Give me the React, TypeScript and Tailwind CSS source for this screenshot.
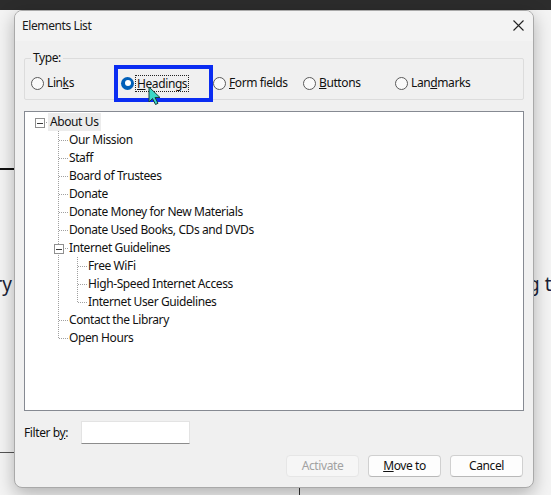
import type { ReactNode } from "react";

type Cell = "none" | "pipe" | "tee" | "ell" | "root";

interface Row {
  label: string;
  cells: Cell[];
  expander?: boolean;
  selected?: boolean;
}

const rows: Row[] = [
  { label: "About Us", cells: ["root"], expander: true, selected: true },
  { label: "Our Mission", cells: ["none", "tee"] },
  { label: "Staff", cells: ["none", "tee"] },
  { label: "Board of Trustees", cells: ["none", "tee"] },
  { label: "Donate", cells: ["none", "tee"] },
  { label: "Donate Money for New Materials", cells: ["none", "tee"] },
  { label: "Donate Used Books, CDs and DVDs", cells: ["none", "tee"] },
  { label: "Internet Guidelines", cells: ["none", "tee"], expander: true },
  { label: "Free WiFi", cells: ["none", "pipe", "tee"] },
  { label: "High-Speed Internet Access", cells: ["none", "pipe", "tee"] },
  { label: "Internet User Guidelines", cells: ["none", "pipe", "ell"] },
  { label: "Contact the Library", cells: ["none", "tee"] },
  { label: "Open Hours", cells: ["none", "ell"] },
];

const font = { fontFamily: '"Noto Sans", "Open Sans", sans-serif' };

function TreeCell({ type, expander }: { type: Cell; expander?: boolean }) {
  const dots = { stroke: "#a0a0a0", strokeWidth: 1, strokeDasharray: "1 1" };
  return (
    <svg width="19" height="18" className="shrink-0" shapeRendering="crispEdges">
      {(type === "pipe" || type === "tee") && <line x1="9.5" y1="0" x2="9.5" y2="18" {...dots} />}
      {type === "ell" && <line x1="9.5" y1="0" x2="9.5" y2="9" {...dots} />}
      {(type === "tee" || type === "ell" || type === "root") && (
        <line x1="10" y1="9.5" x2="19" y2="9.5" {...dots} />
      )}
      {expander && (
        <>
          <rect x="5.5" y="5.5" width="9" height="9" fill="#fff" stroke="#8f8f8f" />
          <line x1="7" y1="10" x2="13" y2="10" stroke="#3a3a3a" />
        </>
      )}
    </svg>
  );
}

function Radio({ label, checked, width }: { label: ReactNode; checked?: boolean; width: string }) {
  return (
    <div className={`flex items-center ${width}`}>
      {checked ? (
        <span className="flex h-[13px] w-[13px] shrink-0 items-center justify-center rounded-full bg-[#005fb8]">
          <span className="h-[6px] w-[6px] rounded-full bg-white" />
        </span>
      ) : (
        <span className="h-[13px] w-[13px] shrink-0 rounded-full border border-[#5a5a5a] bg-[#fafafa]" />
      )}
      <span className={checked ? "ml-[2px] px-[1px] leading-[15px] outline outline-1 outline-dotted outline-[#222]" : "ml-[3px]"}>
        {label}
      </span>
    </div>
  );
}

function Button({ children, disabled }: { children: ReactNode; disabled?: boolean }) {
  return (
    <button
      className={
        disabled
          ? "h-[22px] w-[73px] rounded-[4px] border border-[#e6e6e6] bg-[#f6f6f6] text-[#a2a2a2]"
          : "h-[22px] w-[73px] rounded-[4px] border border-[#d0d0d0] border-b-[#b8b8b8] bg-[#fdfdfd] text-[#111]"
      }
    >
      {children}
    </button>
  );
}

export default function App() {
  return (
    <div
      className="relative h-[495px] w-[551px] overflow-hidden bg-[#f4f4f4] text-[12px] tracking-[-0.4px] text-[#111]"
      style={font}
    >
      {/* page behind the dialog */}
      <div className="h-[10px] w-full bg-[#2c2c2c]" />
      <div className="absolute left-0 top-[168px] h-[2px] w-[200px] bg-[#111]" />
      <div className="absolute left-0 top-[452px] h-[1px] w-[200px] bg-[#555]" />
      <div className="absolute left-[299px] top-[470px] h-[30px] w-[1px] bg-[#333]" />
      <div className="absolute right-[539px] top-[270px] text-[19px] tracking-normal text-[#1a1f36]">Library</div>
      <div className="absolute left-[528px] top-[270px] whitespace-nowrap text-[19px] tracking-normal text-[#1a1f36]">
        g the
      </div>

      {/* dialog window */}
      <div className="absolute left-[14px] top-[10px] flex h-[478px] w-[520px] flex-col overflow-hidden rounded-[8px] border border-[#a9a9a9] bg-[#f0f0f0] shadow-[0_6px_18px_rgba(0,0,0,0.28)]">
        <div className="flex h-[30px] shrink-0 items-start justify-between bg-[#f3f3f3] pl-[7px] pr-[9px] pt-[6px]">
          <span className="text-[#1a1a1a]">Elements List</span>
          <svg width="11" height="11" viewBox="0 0 11 11" className="mt-[3px]">
            <path d="M0.5 0.5 L10.5 10.5 M10.5 0.5 L0.5 10.5" stroke="#222" strokeWidth="1.1" />
          </svg>
        </div>

        <div className="flex flex-1 flex-col px-[9px]">
          <fieldset className="mt-[9px] h-[50px] rounded-[2px] border border-[#dcdcdc] pl-[6px]">
            <legend className="px-[2px] leading-[16px]">Type:</legend>
            <div className="mt-[8px] flex items-center">
              <Radio width="w-[90px]" label={<>Lin<u>k</u>s</>} />
              <Radio width="w-[92px]" checked label={<><u>H</u>eadings</>} />
              <Radio width="w-[90px]" label={<><u>F</u>orm fields</>} />
              <Radio width="w-[92px]" label={<><u>B</u>uttons</>} />
              <Radio width="w-[92px]" label={<>Lan<u>d</u>marks</>} />
            </div>
          </fieldset>

          <div className="mt-[11px] h-[300px] border border-[#868a92] bg-white pl-[5px] pt-[1px]">
            {rows.map((r) => (
              <div key={r.label} className="flex h-[18px] items-center">
                {r.cells.map((c, i) => (
                  <TreeCell key={i} type={c} expander={r.expander && i === r.cells.length - 1} />
                ))}
                <span
                  className={`-ml-[1px] whitespace-nowrap px-[2px] leading-[18px] ${r.selected ? "bg-[#ececec]" : ""}`}
                >
                  {r.label}
                </span>
              </div>
            ))}
          </div>

          <div className="mt-[10px] flex items-center">
            <span className="w-[57px]">
              Filter b<u>y</u>:
            </span>
            <div className="h-[23px] w-[109px] border border-[#e3e3e3] border-b-[#8c8c8c] bg-white" />
          </div>

          <div className="mt-[11px] flex justify-end gap-[9px] pr-[1px]">
            <Button disabled>Activate</Button>
            <Button>
              <u>M</u>ove to
            </Button>
            <Button>Cancel</Button>
          </div>
        </div>
      </div>

      {/* highlight box and mouse pointer */}
      <div className="absolute left-[114px] top-[65px] h-[37px] w-[99px] border-[4px] border-[#0a2cf2]" />
      <svg className="absolute left-[148px] top-[86px]" width="14" height="20" viewBox="0 0 14 20">
        <path
          d="M1 1 L1 16 L4.5 12.5 L7.5 18.5 L10 17.3 L7 11.5 L12 11.5 Z"
          fill="#3ad6c6"
          stroke="#1b3d3a"
          strokeWidth="1"
          strokeLinejoin="round"
        />
      </svg>
    </div>
  );
}
